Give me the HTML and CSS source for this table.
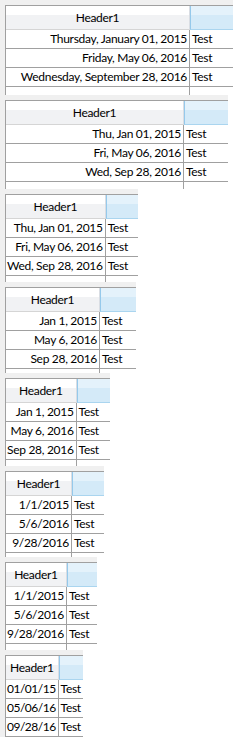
FILE: index.html
```html
<!DOCTYPE html>
<html>
<head>
<meta charset="utf-8">
<link rel="stylesheet" href="styles.css">
</head>
<body>
<div class="block b1 g1">
  <div class="tbl">
    <div class="hc">Header1</div><div class="hb"></div>
    <div class="dc"><span>Thursday, January 01, 2015</span></div><div class="tc">Test</div>
    <div class="dc"><span>Friday, May 06, 2016</span></div><div class="tc">Test</div>
    <div class="dc"><span>Wednesday, September 28, 2016</span></div><div class="tc">Test</div>
    <div class="dc"></div><div class="tc"></div>
  </div>
</div>
<div class="block b2 g2">
  <div class="tbl">
    <div class="hc">Header1</div><div class="hb"></div>
    <div class="dc"><span>Thu, Jan 01, 2015</span></div><div class="tc">Test</div>
    <div class="dc"><span>Fri, May 06, 2016</span></div><div class="tc">Test</div>
    <div class="dc"><span>Wed, Sep 28, 2016</span></div><div class="tc">Test</div>
    <div class="dc"></div><div class="tc"></div>
  </div>
</div>
<div class="block b3 g3 auto">
  <div class="tbl">
    <div class="hc">Header1</div><div class="hb"></div>
    <div class="dc"><span>Thu, Jan 01, 2015</span></div><div class="tc">Test</div>
    <div class="dc"><span>Fri, May 06, 2016</span></div><div class="tc">Test</div>
    <div class="dc"><span>Wed, Sep 28, 2016</span></div><div class="tc">Test</div>
    <div class="dc"></div><div class="tc"></div>
  </div>
</div>
<div class="block b4 g4">
  <div class="tbl">
    <div class="hc">Header1</div><div class="hb"></div>
    <div class="dc"><span>Jan 1, 2015</span></div><div class="tc">Test</div>
    <div class="dc"><span>May 6, 2016</span></div><div class="tc">Test</div>
    <div class="dc"><span>Sep 28, 2016</span></div><div class="tc">Test</div>
    <div class="dc"></div><div class="tc"></div>
  </div>
</div>
<div class="block b5 g5 auto">
  <div class="tbl">
    <div class="hc">Header1</div><div class="hb"></div>
    <div class="dc"><span>Jan 1, 2015</span></div><div class="tc">Test</div>
    <div class="dc"><span>May 6, 2016</span></div><div class="tc">Test</div>
    <div class="dc"><span>Sep 28, 2016</span></div><div class="tc">Test</div>
    <div class="dc"></div><div class="tc"></div>
  </div>
</div>
<div class="block b6 g6">
  <div class="tbl">
    <div class="hc">Header1</div><div class="hb"></div>
    <div class="dc"><span>1/1/2015</span></div><div class="tc">Test</div>
    <div class="dc"><span>5/6/2016</span></div><div class="tc">Test</div>
    <div class="dc"><span>9/28/2016</span></div><div class="tc">Test</div>
    <div class="dc"></div><div class="tc"></div>
  </div>
</div>
<div class="block b7 g7 auto">
  <div class="tbl">
    <div class="hc">Header1</div><div class="hb"></div>
    <div class="dc"><span>1/1/2015</span></div><div class="tc">Test</div>
    <div class="dc"><span>5/6/2016</span></div><div class="tc">Test</div>
    <div class="dc"><span>9/28/2016</span></div><div class="tc">Test</div>
    <div class="dc"></div><div class="tc"></div>
  </div>
</div>
<div class="block b8 g8 auto">
  <div class="tbl">
    <div class="hc">Header1</div><div class="hb"></div>
    <div class="dc"><span>01/01/15</span></div><div class="tc">Test</div>
    <div class="dc"><span>05/06/16</span></div><div class="tc">Test</div>
    <div class="dc"><span>09/28/16</span></div><div class="tc">Test</div>
    <div class="dc"></div><div class="tc"></div>
  </div>
</div>
</body>
</html>
```

FILE: styles.css
```css
html, body {
  margin: 0;
  padding: 0;
  background: #ffffff;
}
body {
  font-family: Lato, "Noto Sans", sans-serif;
  font-size: 12px;
  letter-spacing: -0.3px;
  color: #000;
}
.block {
  background: #f0f0f0;
  padding: 5px 0 0 5px;
  box-sizing: border-box;
  overflow: hidden;
}
.tbl {
  display: grid;
  grid-auto-rows: 19px;
  grid-template-rows: 24px;
  border-left: 1px solid #a0a0a0;
  border-top: 1px solid #a0a0a0;
  background: #fff;
  height: 100%;
  box-sizing: border-box;
  overflow: hidden;
}
.hc {
  background: linear-gradient(#ffffff 0%, #ffffff 40%, #f1f2f4 41%, #f1f2f4 100%);
  border-bottom: 1px solid #d5d5d5;
  border-right: 1px solid #d9dde3;
  text-align: center;
  line-height: 23px;
  overflow: hidden;
  white-space: nowrap;
  padding: 0 2px;
}
.hb {
  background: linear-gradient(#e4f2fb 0%, #e4f2fb 40%, #d4eaf8 41%, #d4eaf8 100%);
  border-bottom: 1px solid #aad5ef;
  border-left: 1px solid #95c9eb;
}
.dc {
  display: flex;
  justify-content: flex-end;
  overflow: hidden;
  padding-right: 2px;
  border-right: 1px solid #a0a0a0;
  border-bottom: 1px solid #a0a0a0;
  line-height: 18px;
  white-space: nowrap;
}
.dc span {
  flex: none;
}
.auto .dc {
  padding-left: 1px;
}
.g8 .dc span {
  letter-spacing: -0.5px;
}
.tc {
  padding-left: 2px;
  border-bottom: 1px solid #a0a0a0;
  line-height: 18px;
  white-space: nowrap;
  overflow: hidden;
}
.g1 .tbl { grid-template-columns: 184px 1fr; }
.g2 .tbl { grid-template-columns: 178px 1fr; }
.g4 .tbl { grid-template-columns: 94px 1fr; }
.g6 .tbl { grid-template-columns: 66px 1fr; }
.auto .tbl { grid-template-columns: max-content 1fr; }
.b1 { width: 233px; height: 95px; }
.b2 { width: 228px; height: 94px; }
.b3 { width: 138px; height: 93px; }
.b4 { width: 136px; height: 91px; }
.b5 { width: 110px; height: 93px; }
.b6 { width: 104px; height: 91px; }
.b7 { width: 97px; height: 93px; }
.b8 { width: 83px; height: 87px; }
```
